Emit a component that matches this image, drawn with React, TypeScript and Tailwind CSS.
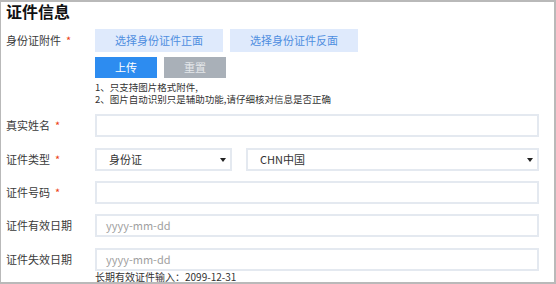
import React from "react";

const font = { fontFamily: '"Noto Sans CJK SC", "Noto Sans", sans-serif' };

type LabelProps = { text: string; required?: boolean };
const Label = ({ text, required }: LabelProps) => (
  <div className="w-[89px] shrink-0 text-[11px] text-[#3a3a3a] flex items-center">
    <span>{text}</span>
    {required && <span className="ml-[5px] text-[#ed4014]">*</span>}
  </div>
);

const Input = ({ placeholder }: { placeholder?: string }) => (
  <div className="w-[444px] h-[23px] border-2 border-[#e4e9f0] bg-white flex items-center pl-[9px] text-[11px] text-[#a0a0a0]">
    {placeholder}
  </div>
);

const Arrow = () => (
  <svg width="6" height="4" viewBox="0 0 6 4" className="shrink-0">
    <path d="M0 0 L6 0 L3 4 Z" fill="#222" />
  </svg>
);

const Select = ({ value, width }: { value: string; width: string }) => (
  <div className={`${width} h-[23px] border-2 border-[#e4e9f0] bg-white flex items-center justify-between pl-[12px] pr-[4px] text-[11px] text-[#333]`}>
    <span>{value}</span>
    <Arrow />
  </div>
);

export default function App() {
  return (
    <div style={font} className="w-[556px] h-[284px] bg-white border-t-2 border-r-2 border-b-2 border-l border-[#b9b9b9] pl-[5px] overflow-hidden">
      <div className="h-[18px] leading-[18px] text-[16px] font-bold text-[#111]">证件信息</div>

      <div className="flex mt-[9px] h-[23px]">
        <Label text="身份证附件" required />
        <div className="flex gap-[7px]">
          <div className="w-[128px] h-[23px] bg-[#dfeafc] text-[#4f8ee0] text-[11px] flex items-center justify-center">选择身份证件正面</div>
          <div className="w-[128px] h-[23px] bg-[#dfeafc] text-[#4f8ee0] text-[11px] flex items-center justify-center">选择身份证件反面</div>
        </div>
      </div>

      <div className="flex mt-[5px]">
        <div className="w-[89px] shrink-0" />
        <div className="flex gap-[7px]">
          <div className="w-[62px] h-[21px] bg-[#2d8cf0] text-white text-[11px] flex items-center justify-center">上传</div>
          <div className="w-[62px] h-[21px] bg-[#a9b0b8] text-[#e4e7ea] text-[11px] flex items-center justify-center">重置</div>
        </div>
      </div>

      <div className="flex mt-[3px]">
        <div className="w-[89px] shrink-0" />
        <div className="text-[9.5px] leading-[12px] text-[#333]">
          <div>1、只支持图片格式附件,</div>
          <div>2、图片自动识别只是辅助功能,请仔细核对信息是否正确</div>
        </div>
      </div>

      <div className="flex mt-[9px]">
        <Label text="真实姓名" required />
        <Input />
      </div>

      <div className="flex mt-[11px]">
        <Label text="证件类型" required />
        <div className="flex gap-[14px]">
          <Select value="身份证" width="w-[137px]" />
          <Select value="CHN中国" width="w-[293px]" />
        </div>
      </div>

      <div className="flex mt-[10px]">
        <Label text="证件号码" required />
        <Input />
      </div>

      <div className="flex mt-[10px]">
        <Label text="证件有效日期" />
        <Input placeholder="yyyy-mm-dd" />
      </div>

      <div className="flex mt-[11px]">
        <Label text="证件失效日期" />
        <Input placeholder="yyyy-mm-dd" />
      </div>

      <div className="flex">
        <div className="w-[89px] shrink-0" />
        <div className="text-[10px] leading-[12px] text-[#333]">长期有效证件输入：2099-12-31</div>
      </div>
    </div>
  );
}
